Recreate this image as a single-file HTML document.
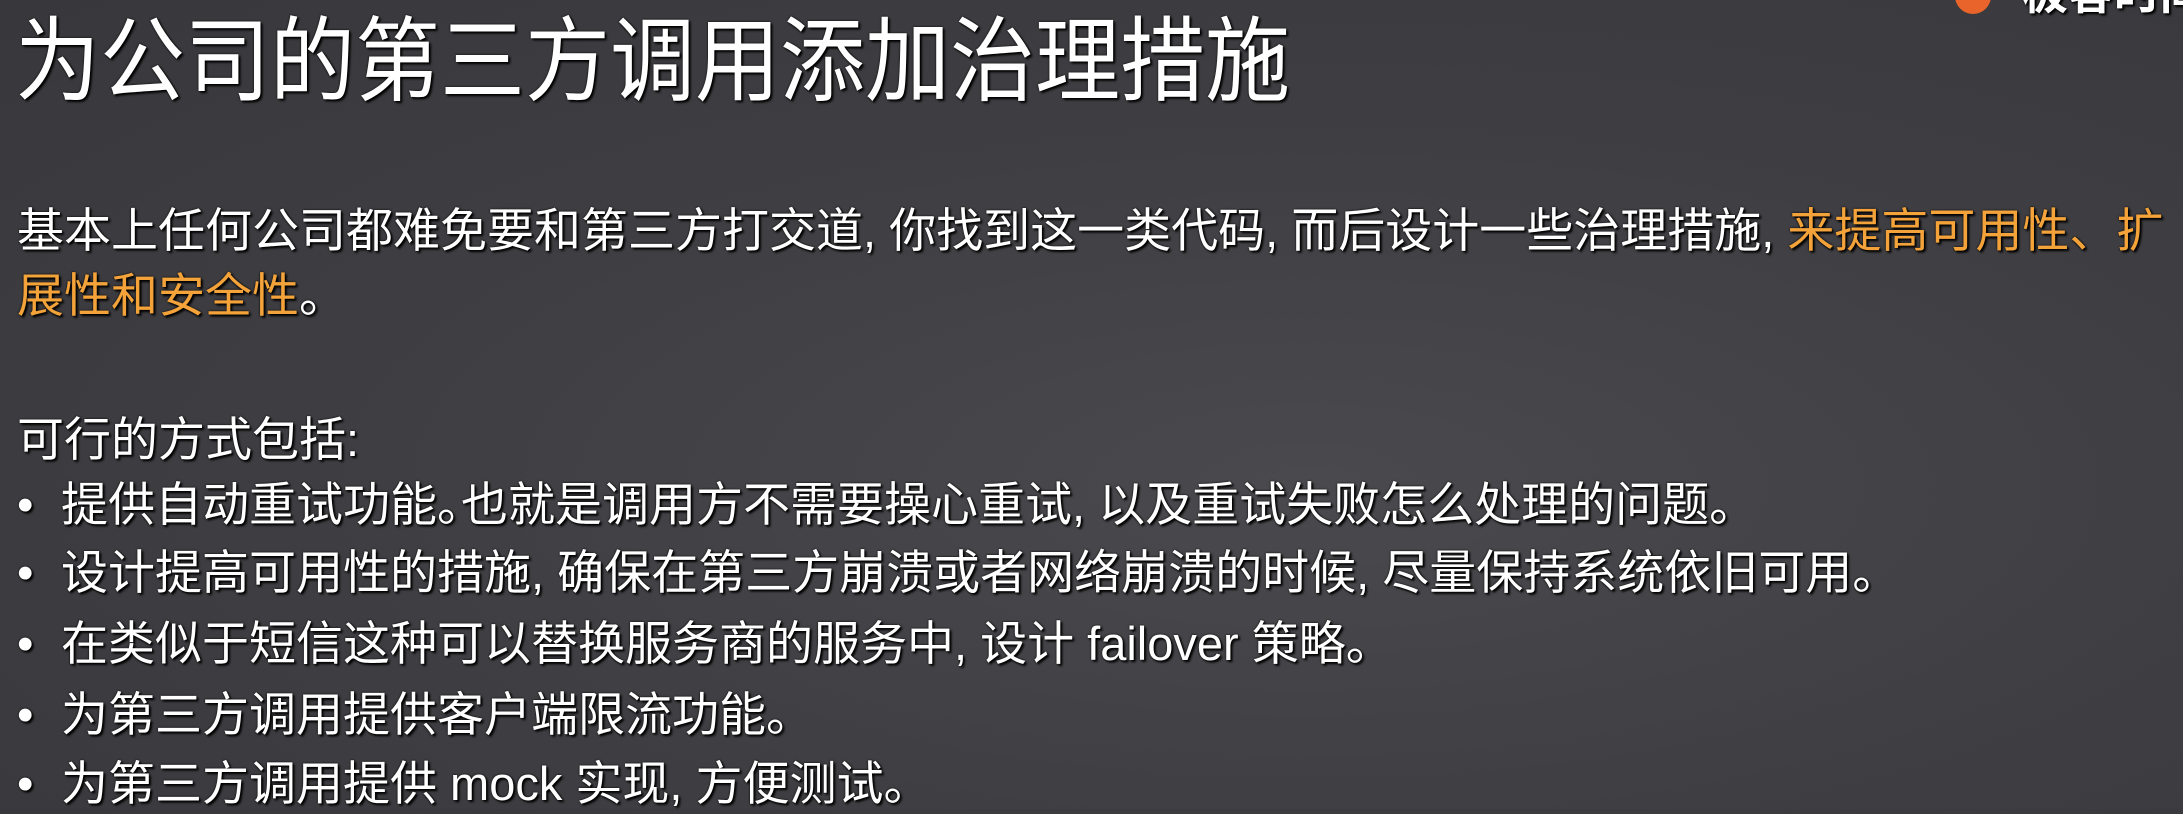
<!DOCTYPE html>
<html><head><meta charset="utf-8"><style>
html,body{margin:0;padding:0;}
body{width:2183px;height:809px;overflow:hidden;position:relative;
background:radial-gradient(ellipse at 60% 60%,#4a4a4e 0%,#3f3f43 50%,#38383c 100%);
font-family:"Liberation Sans","Noto Sans CJK SC",sans-serif;color:#fff;
text-shadow:2px 2px 2px #000,0 0 2px #000;}
.t{position:absolute;left:15px;top:8px;font-size:85px;line-height:110px;white-space:nowrap;transform-origin:left center;transform:scaleY(1.09);}
.l{position:absolute;left:17px;font-size:47px;line-height:60px;white-space:nowrap;}
.o{color:#f3a33a;}
.b{position:absolute;left:17px;font-size:47px;line-height:60px;white-space:nowrap;}
.b span.d{display:inline-block;width:44px;}
.logo{position:absolute;left:1955px;top:-22px;width:36px;height:36px;border-radius:50%;background:#e8642a;}
.lt{position:absolute;left:2022px;top:-30px;font-size:46px;line-height:46px;font-weight:bold;white-space:nowrap;}
</style></head><body>
<div class="logo"></div>
<div class="lt">极客时间</div>
<div class="t">为公司的第三方调用添加治理措施</div>
<div class="l" style="top:201px">基本上任何公司都难免要和第三方打交道, 你找到这一类代码, 而后设计一些治理措施, <span class="o">来提高可用性、扩</span></div>
<div class="l" style="top:266px"><span class="o">展性和安全性</span>。</div>
<div class="l" style="top:410px">可行的方式包括:</div>
<div class="b" style="top:475px"><span class="d">•</span>提供自动重试功能<span style="display:inline-block;width:24px;overflow:hidden;vertical-align:top">。</span>也就是调用方不需要操心重试, 以及重试失败怎么处理的问题。</div>
<div class="b" style="top:543px"><span class="d">•</span>设计提高可用性的措施, 确保在第三方崩溃或者网络崩溃的时候, 尽量保持系统依旧可用。</div>
<div class="b" style="top:614px"><span class="d">•</span>在类似于短信这种可以替换服务商的服务中, 设计 failover 策略。</div>
<div class="b" style="top:685px"><span class="d">•</span>为第三方调用提供客户端限流功能。</div>
<div class="b" style="top:754px"><span class="d">•</span>为第三方调用提供 mock 实现, 方便测试。</div>
</body></html>
